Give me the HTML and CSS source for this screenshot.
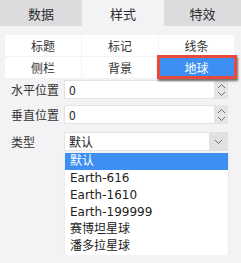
FILE: index.html
```html
<!DOCTYPE html>
<html>
<head>
<meta charset="utf-8">
<link rel="stylesheet" href="styles.css">
</head>
<body>
<div class="tabs">
  <div class="tab">数据</div>
  <div class="tab active">样式</div>
  <div class="tab">特效</div>
</div>
<div class="subtabs">
  <div class="sub">标题</div>
  <div class="sub">标记</div>
  <div class="sub">线条</div>
  <div class="sub">侧栏</div>
  <div class="sub">背景</div>
  <div class="sub selected">地球</div>
</div>
<div class="form">
  <div class="row">
    <span class="label">水平位置</span>
    <div class="field">
      <div class="input">0</div>
      <div class="spin">
        <svg width="9" height="14" viewBox="0 0 9 14"><path d="M1 5 L4.5 1.5 L8 5 M1 9 L4.5 12.5 L8 9" fill="none" stroke="#6f6f74" stroke-width="1"/></svg>
      </div>
    </div>
  </div>
  <div class="row">
    <span class="label">垂直位置</span>
    <div class="field">
      <div class="input">0</div>
      <div class="spin">
        <svg width="9" height="14" viewBox="0 0 9 14"><path d="M1 5 L4.5 1.5 L8 5 M1 9 L4.5 12.5 L8 9" fill="none" stroke="#6f6f74" stroke-width="1"/></svg>
      </div>
    </div>
  </div>
  <div class="row select-row">
    <span class="label">类型</span>
    <div class="select-wrap">
      <div class="field select">
        <div class="input">默认</div>
        <div class="arrow">
          <svg width="9" height="6" viewBox="0 0 9 6"><path d="M1 1 L4.5 4.5 L8 1" fill="none" stroke="#6f6f74" stroke-width="1"/></svg>
        </div>
      </div>
      <ul class="dropdown">
        <li class="hl">默认</li>
        <li>Earth-616</li>
        <li>Earth-1610</li>
        <li>Earth-199999</li>
        <li>赛博坦星球</li>
        <li>潘多拉星球</li>
      </ul>
    </div>
  </div>
</div>
</body>
</html>
```

FILE: styles.css
```css
html, body {
  margin: 0;
  padding: 0;
  background: #f3f3f5;
  font-family: "Noto Sans CJK SC", "DejaVu Sans", sans-serif;
  color: #2a2a2a;
}
.tabs {
  display: grid;
  grid-template-columns: 82px 82px 1fr;
  height: 26px;
}
.tab {
  background: #dcdcdf;
  display: flex;
  align-items: center;
  justify-content: center;
  font-size: 13px;
  color: #2d2d2d;
}
.tab.active {
  background: #f3f3f5;
}
.subtabs {
  display: grid;
  grid-template-columns: 76px 76px 75px;
  grid-auto-rows: 21px;
  gap: 1px;
  margin: 9px 0 0 5px;
}
.sub {
  background: #fff;
  display: flex;
  align-items: center;
  justify-content: center;
  font-size: 12px;
  color: #333;
  position: relative;
}
.sub.selected {
  background: #3d8ff2;
  color: #fff;
}
.sub.selected::after {
  content: "";
  position: absolute;
  top: -2px;
  left: -2px;
  right: -3px;
  bottom: -1px;
  border: 3px solid #e9493c;
  box-shadow: 1px 2px 2px rgba(0,0,0,0.55);
}
.form {
  margin-top: 2px;
  padding-left: 11px;
  display: flex;
  flex-direction: column;
  gap: 6px;
}
.row {
  display: flex;
  align-items: center;
}
.select-row {
  align-items: flex-start;
  margin-top: 2px;
}
.label {
  width: 53px;
  font-size: 12px;
  line-height: 19px;
  color: #333;
}
.field {
  display: flex;
  width: 164px;
  height: 19px;
}
.input {
  flex: 1;
  background: #fff;
  border: 1px solid #e3e3e6;
  box-sizing: border-box;
  font-size: 12px;
  line-height: 17px;
  padding-left: 4px;
  color: #222;
}
.spin {
  width: 13px;
  background: #e4e4e7;
  display: flex;
  align-items: center;
  justify-content: center;
}
.arrow {
  width: 19px;
  background: #e1e1e4;
  display: flex;
  align-items: center;
  justify-content: center;
}
.select .input {
  border-right: none;
}
.select-wrap {
  display: flex;
  flex-direction: column;
}
.dropdown {
  margin: 2px 0 0 1px;
  padding: 0;
  width: 163px;
  list-style: none;
  background: #fff;
  box-shadow: 0 1px 2px rgba(0,0,0,0.08);
}
.dropdown li {
  height: 17px;
  line-height: 17px;
  font-size: 12px;
  padding-left: 5px;
  color: #222;
  font-family: "DejaVu Sans", "Noto Sans CJK SC", sans-serif;
}
.dropdown li.hl {
  background: #3d8ff2;
  color: #fff;
}
```
